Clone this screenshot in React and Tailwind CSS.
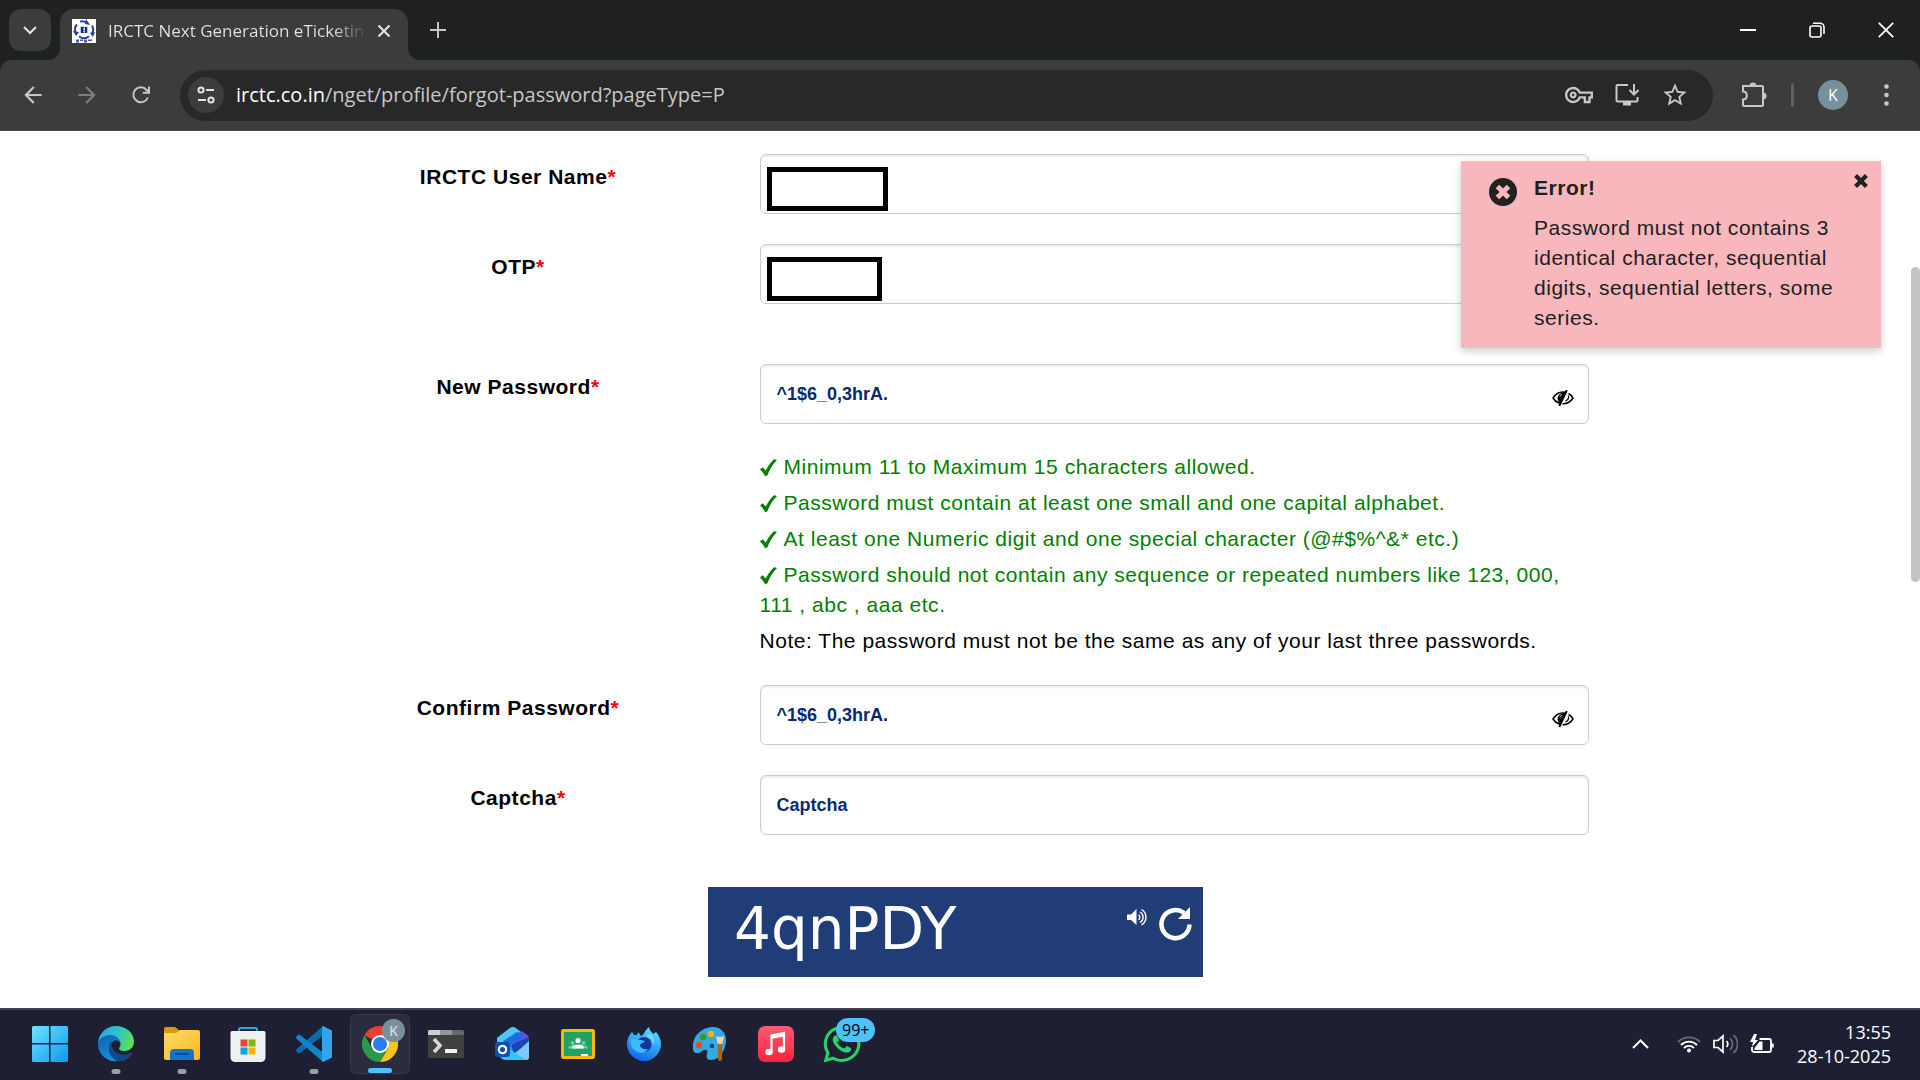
import { useState } from 'react'
import clsx from 'clsx'
import { MdArrowBack, MdArrowForward, MdOutlineVpnKey, MdStarBorder } from 'react-icons/md'
import { FaWhatsapp } from 'react-icons/fa'

const rules = [
  'Minimum 11 to Maximum 15 characters allowed.',
  'Password must contain at least one small and one capital alphabet.',
  'At least one Numeric digit and one special character (@#$%^&* etc.)',
  'Password should not contain any sequence or repeated numbers like 123, 000, 111 , abc , aaa etc.',
]

/* ---------- browser icons ---------- */

function Favicon() {
  return (
    <svg width="24" height="24" viewBox="0 0 24 24" className="shrink-0" aria-hidden="true">
      <rect width="24" height="24" fill="#fff" />
      <g fill="none" stroke="#2b3c9c" strokeWidth="2">
        <path d="M8 2.500a8.500 8.500 0 0 1 8 2" />
        <path d="M5 5.500a8 8 0 0 0-1.500 8" />
        <path d="M20 6.500a8 8 0 0 1 0 8" />
        <path d="M7 17.500a9 9 0 0 0 10 0" />
      </g>
      <path d="m14 0 4 6-5-1zM1 12l6 1-3 4zM23 13l-2 5-3-4z" fill="#2b3c9c" />
      <path d="M8 7.500h8v6.500H8z" fill="#c3c9ec" />
      <path d="M9 8h3v1.500h-1V11h1v1h-1v1h1v1H9zM13 8h2v6h-2z" fill="#1b2a86" />
      <path d="M4 20.500h3v3H4zM8 20.500h3v1.500H8zM12 20.500h3v3h-3zM16 20.500h4v1.500h-4z" fill="#4a59ae" />
    </svg>
  )
}

function ReloadIcon() {
  return (
    <svg width="20" height="20" viewBox="0 0 20 20" fill="none" stroke="currentColor" strokeWidth="2" aria-hidden="true">
      <path d="M16.800 12.500a7.500 7.500 0 1 1-1.200-7.500l2 2.500" />
      <path d="M18 1.500v6.200h-6.200" />
    </svg>
  )
}

function TuneIcon() {
  return (
    <svg width="22" height="22" viewBox="0 0 22 22" fill="none" stroke="currentColor" strokeWidth="2" aria-hidden="true">
      <circle cx="6" cy="6" r="2.600" />
      <path d="M11 6h8M3 16h8" />
      <circle cx="16" cy="16" r="2.600" />
    </svg>
  )
}

function InstallIcon() {
  return (
    <svg width="24" height="24" viewBox="0 0 24 24" fill="none" stroke="currentColor" strokeWidth="2" aria-hidden="true">
      <path d="M13 2H2.500a1 1 0 0 0-1 1v14a1.500 1.500 0 0 0 1.500 1.500h18.500a1 1 0 0 0 1-1V14" />
      <path d="M8 20.500h8" strokeWidth="4" />
      <path d="M19 1v10M14.500 7l4.500 4.500L23.500 7" />
    </svg>
  )
}

function PuzzleIcon() {
  return (
    <svg width="26" height="26" viewBox="0 0 26 26" fill="none" stroke="currentColor" strokeWidth="2" aria-hidden="true">
      <path d="M2 4h19a1 1 0 0 1 1 1v18a1 1 0 0 1-1 1H3a1 1 0 0 1-1-1v-5.500c5 0 5-8 0-8z" />
      <path d="M8.500 4a3.500 3.500 0 0 1 7 0zM22 10.500a3.500 3.500 0 0 1 0 7z" fill="currentColor" stroke="none" />
    </svg>
  )
}

function Chrome() {
  const iconButton = 'flex items-center justify-center'
  return (
    <header className="bg-[#1f2120] font-['Open_Sans','Noto_Sans',sans-serif] text-[#c7c7c7]">
      <div className="flex h-[60px] items-center">
        <button className="ml-[9px] flex size-[42px] items-center justify-center rounded-xl bg-[#3c3c3c]" aria-label="Search tabs">
          <svg width="14" height="10" viewBox="0 0 14 10" fill="none" stroke="#e3e3e3" strokeWidth="2" aria-hidden="true">
            <path d="m1 2 6 6 6-6" />
          </svg>
        </button>
        <div className="relative ml-[9px] flex h-[51px] w-[348px] items-center self-end rounded-t-[14px] bg-[#3c3c3c] pb-2 pl-3">
          <svg className="absolute -left-3 bottom-0" width="12" height="12" aria-hidden="true">
            <path d="M12 0v12H0A12 12 0 0 0 12 0z" fill="#3c3c3c" />
          </svg>
          <svg className="absolute -right-3 bottom-0" width="12" height="12" aria-hidden="true">
            <path d="M0 0v12h12A12 12 0 0 1 0 0z" fill="#3c3c3c" />
          </svg>
          <Favicon />
          <div className="ml-3 w-[264px] whitespace-nowrap bg-linear-to-r from-[#e3e3e3] from-85% to-transparent to-98% bg-clip-text text-[17px] leading-7 text-transparent">
            IRCTC Next Generation eTicketin
          </div>
          <button className="ml-[5px] text-[#e3e3e3]" aria-label="Close tab">
            <svg width="14" height="14" viewBox="0 0 14 14" stroke="currentColor" strokeWidth="2" aria-hidden="true">
              <path d="m1.500 1.500 11 11m0-11-11 11" />
            </svg>
          </button>
        </div>
        <button className="ml-[22px]" aria-label="New tab">
          <svg width="16" height="16" viewBox="0 0 16 16" stroke="currentColor" strokeWidth="2" aria-hidden="true">
            <path d="M8 0v16M0 8h16" />
          </svg>
        </button>
        <div className="ml-auto flex text-white">
          <button className="flex h-[60px] w-[69px] items-center justify-center" aria-label="Minimize">
            <svg width="16" height="16" stroke="currentColor" strokeWidth="2" aria-hidden="true">
              <path d="M0 8h16" />
            </svg>
          </button>
          <button className="flex h-[60px] w-[69px] items-center justify-center" aria-label="Restore">
            <svg width="16" height="16" viewBox="0 0 16 16" fill="none" stroke="currentColor" strokeWidth="1.600" aria-hidden="true">
              <rect x="1" y="4" width="11" height="11" rx="2" />
              <path d="M4 1.200h7A4 4 0 0 1 15 5v7" />
            </svg>
          </button>
          <button className="flex h-[60px] w-[69px] items-center justify-center" aria-label="Close">
            <svg width="16" height="16" viewBox="0 0 16 16" stroke="currentColor" strokeWidth="1.800" aria-hidden="true">
              <path d="m.8.800 14.400 14.400m0-14.400L.8 15.200" />
            </svg>
          </button>
        </div>
      </div>

      {/* Toolbar */}
      <div className="flex h-[71px] items-center rounded-t-xl border-b border-[#4b4b4b] bg-[#3c3c3c] pl-1.5 pr-3">
        <button className={clsx(iconButton, 'w-[54px]')} aria-label="Back"><MdArrowBack size={26} /></button>
        <button className={clsx(iconButton, 'w-[54px] text-[#7d7d7d]')} aria-label="Forward"><MdArrowForward size={26} /></button>
        <button className={clsx(iconButton, 'w-[54px]')} aria-label="Reload"><ReloadIcon /></button>
        <div className="ml-3 flex h-[51px] flex-1 items-center rounded-full bg-[#282828] pl-2 pr-6">
          <button className="flex size-9 items-center justify-center rounded-full bg-[#3c3c3c] text-[#e3e3e3]" aria-label="Site information">
            <TuneIcon />
          </button>
          <div className="ml-3 flex-1 text-[20px] leading-7">
            <span className="text-white">irctc.co.in</span>/nget/profile/forgot-password?pageType=P
          </div>
          <div className="flex items-center gap-[22px]">
            <button aria-label="Passwords"><MdOutlineVpnKey size={28} /></button>
            <button aria-label="Install app"><InstallIcon /></button>
            <button aria-label="Bookmark"><MdStarBorder size={28} /></button>
          </div>
        </div>
        <button className="ml-7" aria-label="Extensions"><PuzzleIcon /></button>
        <div className="ml-6 h-6 w-[3px] rounded bg-[#5f6062]" />
        <button className="ml-6 flex size-[30px] items-center justify-center rounded-full bg-[#78909c] text-[16px] text-white">
          K
        </button>
        <button className="ml-7 mr-3 flex w-5 justify-center" aria-label="Menu">
          <svg width="5" height="22" fill="currentColor" aria-hidden="true">
            <circle cx="2.500" cy="2.500" r="2.300" />
            <circle cx="2.500" cy="11" r="2.300" />
            <circle cx="2.500" cy="19.500" r="2.300" />
          </svg>
        </button>
      </div>
    </header>
  )
}

/* ---------- page ---------- */

function EyeSlash() {
  return (
    <svg width="22" height="16" viewBox="0 0 22 16" fill="none" stroke="#000" strokeWidth="1.500" aria-hidden="true">
      <path d="M13.500 2.200C7.500 1 3.500 4 1 8c1.500 2.500 3.500 4 6 5" />
      <path d="M16.500 3.500C18.500 4.500 20 6 21 8c-2.500 4-5.500 6-10.500 5.800" />
      <path d="M13.500 1.500 7.500 15 5.500 8.500C6 4.500 9 2.500 13.500 1.500z" fill="#000" stroke="none" />
      <path d="M14.800 0 7.300 16" strokeWidth="2" />
      <path d="M16.500 5.500c.5 2.500-.8 4.500-3 5.500" strokeWidth="1.200" />
      <path d="M8 6.500c.3-1.200 1-1.800 2-2" stroke="#fff" strokeWidth="1" />
    </svg>
  )
}

function CheckMark() {
  return (
    <svg className="mr-[7px] inline-block align-[-2px]" width="17" height="17" viewBox="0 0 17 17" aria-hidden="true">
      <path d="M0 10.500 2.600 8.200 5.800 11.500C8 7 10.500 3.500 14 .2L17 1C12.500 5.500 9.500 10.500 7.300 16.500L5 17C3.800 14.500 2.200 12.300 0 10.500z" fill="green" />
    </svg>
  )
}

function Field({ id, label, redacted, eye, children, ...input }) {
  return (
    <div className="grid grid-cols-[485fr_829fr]">
      <label htmlFor={id} className="pl-0.5 pt-2 text-center text-[21px] font-bold leading-[30px] tracking-wide text-black">
        {label}
        <span className="text-[#f00]">*</span>
      </label>
      <div>
        <div className="relative">
          <input
            id={id}
            className="block h-[60px] w-full rounded-md border border-[#ccc] bg-white px-4 text-[18px] font-bold text-[#0a2a70] shadow-[inset_0_2px_2px_rgba(0,0,0,0.07)] outline-none placeholder:text-[#0a2a70]"
            {...input}
          />
          {redacted && (
            <div className={clsx('absolute left-[7px] top-[13px] h-11 border-5 border-black bg-white', redacted)} />
          )}
          {eye && (
            <button type="button" className="absolute right-[15px] top-[26px]" aria-label="Toggle password">
              <EyeSlash />
            </button>
          )}
        </div>
        {children}
      </div>
    </div>
  )
}

function Toast({ onClose }) {
  return (
    <div
      role="alert"
      className="absolute right-[39px] top-[30px] flex w-[420px] bg-[#f8b7bd] pb-[15px] pl-7 pt-3 text-[#212121] shadow-[0_3px_8px_rgba(0,0,0,0.2)]"
    >
      <svg className="mt-[5px] shrink-0" width="28" height="28" viewBox="0 0 28 28" aria-hidden="true">
        <circle cx="14" cy="14" r="14" fill="#212121" />
        <path d="m8.500 8.500 11 11m0-11-11 11" stroke="#f8b7bd" strokeWidth="5" />
      </svg>
      <div className="ml-[17px] w-[310px] text-[21px] leading-[30px] tracking-wide">
        <div className="mb-[10px] font-bold">Error!</div>
        <p>Password must not contains 3 identical character, sequential digits, sequential letters, some series.</p>
      </div>
      <button className="absolute right-[13px] top-[13px]" onClick={onClose} aria-label="Dismiss">
        <svg width="14" height="14" viewBox="0 0 14 14" stroke="#212121" strokeWidth="4.200" aria-hidden="true">
          <path d="m1.600 1.600 10.800 10.800m0-10.800L1.600 12.400" />
        </svg>
      </button>
    </div>
  )
}

function Captcha() {
  return (
    <div className="mx-auto mt-[52px] flex h-[90px] w-[495px] items-start bg-[#213d77] pl-[26px] pr-[11px] text-white">
      <span className="flex-1 font-['DejaVu_Sans',sans-serif] text-[58px] leading-[84px]">4qnPDY</span>
      <button type="button" className="mt-[21px]" aria-label="Play captcha">
        <svg width="21" height="19" viewBox="0 0 21 19" aria-hidden="true">
          <path d="M0 6.500h4L9.500 1v16L4 12H0z" fill="#fff" />
          <g fill="none" stroke="#fff" strokeWidth="1.400">
            <path d="M11.500 6.800a3 3 0 0 1 0 5M13 4a6 6 0 0 1 0 10.500M14.500 1.500a9 9 0 0 1 0 15.500" />
          </g>
        </svg>
      </button>
      <button type="button" className="ml-[11px] mt-5" aria-label="Refresh captcha">
        <svg width="33" height="34" viewBox="0 0 33 34" aria-hidden="true">
          <path d="M30.500 17.500A14 14 0 1 1 25 6" fill="none" stroke="#fff" strokeWidth="4.500" />
          <path d="M31 0v12H19z" fill="#fff" />
        </svg>
      </button>
    </div>
  )
}

/* ---------- taskbar ---------- */

function WindowsLogo() {
  return (
    <svg width="36" height="36" viewBox="0 0 36 36" aria-hidden="true">
      <defs>
        <linearGradient id="win" x1="0" y1="0" x2="1" y2="1">
          <stop offset="0" stopColor="#6fe3ff" />
          <stop offset="1" stopColor="#079bf2" />
        </linearGradient>
      </defs>
      <path d="M0 1.500Q0 0 1.500 0H17v17H0zM18.500 0h16Q36 0 36 1.500V17H18.500zM0 18.500h17V36H1.500Q0 36 0 34.500zM18.500 18.500H36v16q0 1.500-1.500 1.500h-16z" fill="url(#win)" />
    </svg>
  )
}

function EdgeLogo() {
  return (
    <svg width="36" height="36" viewBox="0 0 36 36" aria-hidden="true">
      <defs>
        <linearGradient id="edgeTop" x1="0" y1="0.3" x2="1" y2="0.6">
          <stop offset="0" stopColor="#2aa9e0" />
          <stop offset="0.5" stopColor="#2fc3c8" />
          <stop offset="1" stopColor="#62e04d" />
        </linearGradient>
        <linearGradient id="edgeMid" x1="0" y1="0" x2="0.5" y2="1">
          <stop offset="0" stopColor="#0f62ad" />
          <stop offset="1" stopColor="#1490df" />
        </linearGradient>
      </defs>
      <path d="M0 18C0 8 8 0 18 0s18 7 18 15.500C36 21 32 25 26.500 25c-4 0-5.500-1.500-5.500-2.500s1.500-1.500 1.500-4.500c0-4-4-7.500-9.500-7.500C6 10.500 1 14 0 18z" fill="url(#edgeTop)" />
      <path d="M0 18c.8-5 5.500-9 12-9 7 0 10.500 5 10.500 8.500 0 0-2-4-6-3-4.500 1.500-5.500 9 0 14.500 3 3 8 4 8 4C14 40-.5 30 0 18z" fill="url(#edgeMid)" />
      <path d="M12.500 16c-4 7-.5 17.500 8.500 19.500 6 0 10.500-3.500 13-7.500.5-1-.5-1.500-1.500-1C25 30.500 16 28 14 21c-.5-2 0-3.500.5-5z" fill="#114a8b" />
    </svg>
  )
}

function FolderLogo() {
  return (
    <svg width="36" height="34" viewBox="0 0 36 34" aria-hidden="true">
      <defs>
        <linearGradient id="folder" x1="0" y1="0" x2="1" y2="1">
          <stop offset="0" stopColor="#ffda67" />
          <stop offset="1" stopColor="#f9b91c" />
        </linearGradient>
      </defs>
      <path d="M0 2q0-2 2-2h9l5 4v6H0z" fill="#d99a05" />
      <path d="M0 6h12l4-3h18q2 0 2 2v26q0 2-2 2H2q-2 0-2-2z" fill="url(#folder)" />
      <path d="M6 33v-7q0-4 4-4h16q4 0 4 4v7z" fill="#1374c8" />
      <path d="M11 27h14" stroke="#0a4b90" strokeWidth="2" />
    </svg>
  )
}

function StoreLogo() {
  return (
    <svg width="36" height="36" viewBox="0 0 36 36" aria-hidden="true">
      <path d="M9 7V3.500Q9 2 10.500 2h15Q27 2 27 3.500V7" fill="none" stroke="#2ba6e0" strokeWidth="2" />
      <path d="M.5 6.500Q.5 5 2 5h32q1.500 0 1.500 1.500V31q0 5-5 5h-25q-5 0-5-5z" fill="#eff0f1" />
      <path d="M10.500 13.500h7v7h-7z" fill="#e8432d" />
      <path d="M18.500 13.500h7v7h-7z" fill="#7db900" />
      <path d="M10.500 21.500h7v7h-7z" fill="#10a1ea" />
      <path d="M18.500 21.500h7v7h-7z" fill="#fbb60a" />
    </svg>
  )
}

function CodeLogo() {
  return (
    <svg width="36" height="36" viewBox="0 0 36 36" aria-hidden="true">
      <path d="M.8 23 27 0v9.500L4 27q-1 .8-2 0l-1.300-1.300q-1.200-1.200.1-2.700z" fill="#0c6cb0" />
      <path d="M.8 13 27 36v-9.500L4 9Q3 8.200 2 9L.7 10.300Q-.5 11.500.8 13z" fill="#1583ca" />
      <path d="M27 0q-1 .5-1 1.500v33q0 1 1 1.500l9-4.500v-27z" fill="#31a4ec" />
    </svg>
  )
}

function ChromeLogo() {
  return (
    <svg width="36" height="36" viewBox="0 0 36 36" aria-hidden="true">
      <path d="M18 18 2.400 9A18 18 0 0 1 33.600 9z" fill="#e8422f" />
      <path d="M18 9h15.600A18 18 0 0 1 18 36l7.800-13.500z" fill="#fcc419" />
      <path d="M18 36A18 18 0 0 1 2.400 9l7.800 13.500L18 27l7.800-4.500z" fill="#2b9a48" />
      <circle cx="18" cy="18" r="9" fill="#fff" />
      <circle cx="18" cy="18" r="7" fill="#2e7bee" />
    </svg>
  )
}

function TerminalLogo() {
  return (
    <svg width="36" height="28" viewBox="0 0 36 28" aria-hidden="true">
      <rect width="36" height="28" rx="1.500" fill="#3f4040" />
      <path d="M1.500 0H12v5H0V1.500Q0 0 1.500 0z" fill="#cfcfcf" />
      <path d="M12 0h12v5H12z" fill="#979797" />
      <path d="M24 0h10.500Q36 0 36 1.500V5H24z" fill="#686868" />
      <path d="m6 9 6 6.500L6 22" fill="none" stroke="#d8d8d8" strokeWidth="3.500" />
      <path d="M17 19h12v4H17z" fill="#f0f0f0" />
    </svg>
  )
}

function OutlookLogo() {
  return (
    <svg width="36" height="34" viewBox="0 0 36 34" aria-hidden="true">
      <path d="M3 11 16 1q3-2 6 0l13 10v19q0 3-3 3H12q-6 0-9-8z" fill="#2a8fe8" />
      <path d="M3 11 16 1q2-1.200 4-.8l6 4L8 18H3z" fill="#54c3f8" />
      <path d="m16 12 12-8 7 5.500L22 19z" fill="#5a54dc" />
      <path d="m9 14 14-9 6 4-15 10z" fill="#1b6fdd" />
      <path d="m17 18 18-8v7l-15 9z" fill="#1c44b4" />
      <path d="M35 14v16q0 3-3 3H14z" fill="#7ec8fb" />
      <path d="m12 20 20 13H13q-5 0-7-4z" fill="#35c3f7" />
      <rect x="1" y="15" width="15" height="15" rx="3" fill="#0f4fb5" />
      <circle cx="8.500" cy="22.500" r="3.700" fill="none" stroke="#fff" strokeWidth="2.200" />
    </svg>
  )
}

function ClassroomLogo() {
  return (
    <svg width="34" height="30" viewBox="0 0 34 30" aria-hidden="true">
      <rect width="34" height="30" rx="2.500" fill="#f5b70d" />
      <path d="M3 3h28v24H3z" fill="#1ea362" />
      <g fill="#79c9a0">
        <circle cx="11.500" cy="14" r="2" />
        <circle cx="22.500" cy="14" r="2" />
        <path d="M7 19.500q0-3 4.500-3H22q5 0 5 3z" />
      </g>
      <circle cx="17" cy="11.500" r="2.600" fill="#fff" />
      <path d="M11 19.500q0-4 6-4t6 4z" fill="#fff" />
      <path d="M20 25h7v2h-7z" fill="#fff" />
    </svg>
  )
}

function FirefoxLogo() {
  return (
    <svg width="36" height="36" viewBox="0 0 36 36" aria-hidden="true">
      <defs>
        <linearGradient id="fox" x1="0.7" y1="0" x2="0.3" y2="1">
          <stop offset="0" stopColor="#5fe0ff" />
          <stop offset="0.5" stopColor="#2b9ff5" />
          <stop offset="1" stopColor="#1262e8" />
        </linearGradient>
      </defs>
      <path d="M23 1c0 3 2.500 5 4.500 7L30 6c2 2 5 7 5 12A17 17 0 0 1 1 18c0-5 2-9 5-12l2 3h3l1-3 3 4c3-1 3-5 8-9z" fill="url(#fox)" />
      <circle cx="18" cy="18.500" r="7.500" fill="#17349c" />
      <path d="M5 13c4-1 7 1 10 1l4 1c-1 2-4 2-5 4 0 3 4 5 8 4-2 4-8 5-12 2-4-2-6-7-5-12z" fill="#3cbcfb" />
      <path d="M19 10c5 0 8 4 8 9 2-3 1-9-3-11z" fill="#6fe0ff" />
    </svg>
  )
}

function PaintLogo() {
  return (
    <svg width="36" height="36" viewBox="0 0 36 36" aria-hidden="true">
      <path d="M1 22C0 10 10 1 21 1c8 0 13 6 13 13 0 9-6 20-15 20-4 0-5-3-4-6s0-5-3-4c-3 1-4 4-7 3-3 0-4-2-4-5z" fill="#35a9e2" />
      <circle cx="7" cy="19" r="3.200" fill="#dc5322" />
      <circle cx="11" cy="11" r="3.200" fill="#399b28" />
      <circle cx="19" cy="8" r="3.200" fill="#f9b40b" />
      <circle cx="20" cy="20" r="2.200" fill="#173c68" />
      <path d="M26 16h4v17q0 2-2 2t-2-2z" fill="#b3610c" />
      <path d="M24 10q4 2 8 0l-1 5-1 3h-4l-1-3z" fill="#f2d5a6" />
    </svg>
  )
}

function MusicLogo() {
  return (
    <svg width="36" height="36" viewBox="0 0 36 36" aria-hidden="true">
      <defs>
        <linearGradient id="music" x1="0" y1="0" x2="0" y2="1">
          <stop offset="0" stopColor="#fb5c74" />
          <stop offset="1" stopColor="#fa233b" />
        </linearGradient>
      </defs>
      <rect width="36" height="36" rx="7" fill="url(#music)" />
      <path d="M13.500 25.500V10L26 7.500V23" fill="none" stroke="#fff" strokeWidth="2.200" />
      <path d="m13 8.500 14-2.700v4.500L13 13z" fill="#fff" />
      <ellipse cx="11" cy="26" rx="3.700" ry="3.200" fill="#fff" />
      <ellipse cx="23.500" cy="23.500" rx="3.700" ry="3.200" fill="#fff" />
    </svg>
  )
}

const apps = [
  { name: 'Start', Icon: WindowsLogo },
  { name: 'Edge', Icon: EdgeLogo, running: true },
  { name: 'File Explorer', Icon: FolderLogo, running: true },
  { name: 'Store', Icon: StoreLogo },
  { name: 'VS Code', Icon: CodeLogo, running: true },
  { name: 'Chrome', Icon: ChromeLogo, active: true },
  { name: 'Terminal', Icon: TerminalLogo },
  { name: 'Outlook', Icon: OutlookLogo },
  { name: 'Classroom', Icon: ClassroomLogo },
  { name: 'Firefox', Icon: FirefoxLogo },
  { name: 'Paint', Icon: PaintLogo },
  { name: 'Music', Icon: MusicLogo },
  { name: 'WhatsApp', Icon: () => <FaWhatsapp size={42} color="#25d366" />, badge: '99+' },
]

function Taskbar() {
  return (
    <footer className="flex h-[72px] items-center border-t-2 border-[#43434f] bg-[#1f1f33] pb-0.5 pl-5 pr-[29px] font-['Open_Sans','Noto_Sans',sans-serif] text-white">
      <div className="flex gap-1.5">
        {apps.map(({ name, Icon, running, active, badge }) => (
          <button
            key={name}
            aria-label={name}
            className={clsx(
              'relative flex size-[60px] items-center justify-center rounded-md',
              active && 'border border-[#38384a] bg-[#2c2c3f]'
            )}
          >
            <Icon />
            {running && <span className="absolute bottom-0 left-1/2 h-[5px] w-[9px] -translate-x-1/2 rounded-full bg-[#9c9ca5]" />}
            {active && (
              <>
                <span className="absolute bottom-0 left-1/2 h-[5px] w-6 -translate-x-1/2 rounded-full bg-[#4cc2ff]" />
                <span className="absolute right-1 top-1 flex size-[23px] items-center justify-center rounded-full bg-[#78909c] text-[14px] font-semibold text-[#cfd8dc]">
                  K
                </span>
              </>
            )}
            {badge && (
              <span className="absolute left-[24px] top-1 flex h-6 items-center rounded-full bg-[#4cc2ff] px-1.5 text-[16px] text-black">
                {badge}
              </span>
            )}
          </button>
        ))}
      </div>

      {/* Tray */}
      <div className="ml-auto flex items-center">
        <button aria-label="Show hidden icons">
          <svg width="17" height="10" viewBox="0 0 17 10" fill="none" stroke="#fff" strokeWidth="2" aria-hidden="true">
            <path d="m1 9 7.500-7.500L16 9" />
          </svg>
        </button>
        <button className="ml-7 flex items-center gap-3" aria-label="Network, volume and battery">
          <svg width="24" height="20" viewBox="0 0 24 20" fill="none" stroke="#fff" strokeWidth="1.800" aria-hidden="true">
            <path d="M1 8a15.500 15.500 0 0 1 22 0" stroke="#6b6b78" />
            <path d="M4 11a11.300 11.300 0 0 1 16 0M7 14a7 7 0 0 1 10 0" />
            <circle cx="12" cy="16.500" r="2" fill="#fff" stroke="none" />
          </svg>
          <svg width="25" height="22" viewBox="0 0 25 22" fill="none" stroke="#fff" strokeWidth="1.700" aria-hidden="true">
            <path d="M1 7.500h4L10 3v16l-5-4.500H1zM13.500 8a4.500 4.500 0 0 1 0 6" />
            <path d="M17 5a8.500 8.500 0 0 1 0 12M20.500 2a12 12 0 0 1 0 18" stroke="#6b6b78" />
          </svg>
          <svg width="25" height="20" viewBox="0 0 25 20" fill="none" stroke="#fff" strokeWidth="1.800" aria-hidden="true">
            <path d="M9.500 5H19a2 2 0 0 1 2 2v9a2 2 0 0 1-2 2H4a2 2 0 0 1-2-2v-3" />
            <path d="M22 9.500v4" strokeWidth="3.500" />
            <path d="M9.500 7.500h3V16H4.500v-2z" fill="#fff" stroke="none" />
            <path d="M4 0 0 8h3l-1 5 6-7H5l2-6z" fill="#fff" stroke="none" />
          </svg>
        </button>
        <button className="ml-[22px] text-right text-[18px] leading-6">
          <div>13:55</div>
          <div>28-10-2025</div>
        </button>
      </div>
    </footer>
  )
}

export default function App() {
  const [showToast, setShowToast] = useState(true)

  return (
    <div className="flex min-h-screen flex-col bg-white">
      <Chrome />
      <main className="relative flex flex-1 font-['Liberation_Sans',Arial,sans-serif]">
        <form className="flex-1 pb-[30px] pt-[23px]" onSubmit={(e) => e.preventDefault()}>
          <div className="mx-auto flex max-w-[1362px] flex-col gap-[30px] pr-12">
            <Field id="username" label="IRCTC User Name" redacted="w-[121px]" />
            <Field id="otp" label="OTP" redacted="w-[115px]" />
            <div className="mt-[30px]">
              <Field id="new-password" label="New Password" defaultValue="^1$6_0,3hrA." eye>
                <ul className="mt-7 -mb-px space-y-1.5 text-[21px] leading-[30px] tracking-wide text-[green]">
                  {rules.map((rule) => (
                    <li key={rule}>
                      <CheckMark />
                      {rule}
                    </li>
                  ))}
                  <li className="text-black">
                    Note: The password must not be the same as any of your last three passwords.
                  </li>
                </ul>
              </Field>
            </div>
            <Field id="confirm-password" label="Confirm Password" defaultValue="^1$6_0,3hrA." eye />
            <Field id="captcha" label="Captcha" placeholder="Captcha" />
          </div>
          <Captcha />
        </form>
        {/* Scrollbar */}
        <div className="w-[9px] pt-[136px]">
          <div className="h-[315px] rounded-full bg-[#c4c4c4]" />
        </div>
        {showToast && <Toast onClose={() => setShowToast(false)} />}
      </main>
      <Taskbar />
    </div>
  )
}
